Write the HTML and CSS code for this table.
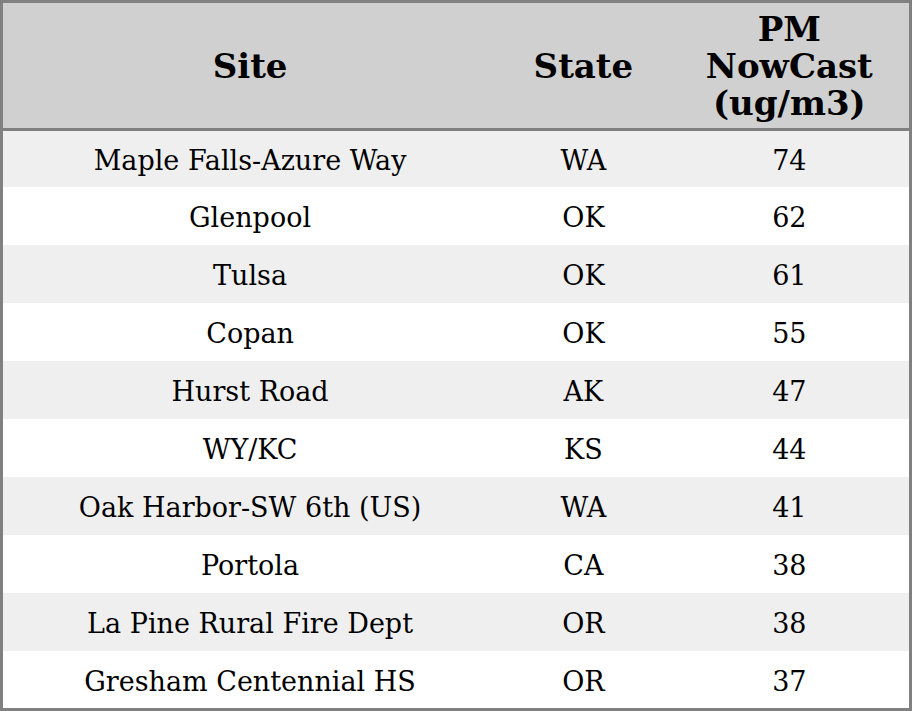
FILE: index.html
```html
<!DOCTYPE html>
<html>
<head>
<meta charset="utf-8">
<link rel="stylesheet" href="styles.css">
</head>
<body>
<table class="aq">
  <thead>
    <tr>
      <th class="c-site">Site</th>
      <th class="c-state">State</th>
      <th class="c-pm">PM<br>NowCast<br>(ug/m3)</th>
    </tr>
  </thead>
  <tbody>
    <tr class="first"><td>Maple Falls-Azure Way</td><td>WA</td><td>74</td></tr>
    <tr><td>Glenpool</td><td>OK</td><td>62</td></tr>
    <tr><td>Tulsa</td><td>OK</td><td>61</td></tr>
    <tr><td>Copan</td><td>OK</td><td>55</td></tr>
    <tr><td>Hurst Road</td><td>AK</td><td>47</td></tr>
    <tr><td>WY/KC</td><td>KS</td><td>44</td></tr>
    <tr><td>Oak Harbor-SW 6th (US)</td><td>WA</td><td>41</td></tr>
    <tr><td>Portola</td><td>CA</td><td>38</td></tr>
    <tr><td>La Pine Rural Fire Dept</td><td>OR</td><td>38</td></tr>
    <tr class="last"><td>Gresham Centennial HS</td><td>OR</td><td>37</td></tr>
  </tbody>
</table>
</body>
</html>
```
FILE: styles.css
```css
html, body {
  margin: 0;
  padding: 0;
  background: #ffffff;
}
.aq {
  width: 912px;
  border-collapse: collapse;
  border: 3px solid #808080;
  font-family: "DejaVu Serif", serif;
  color: #000;
  table-layout: fixed;
}
.aq th {
  background: #d0d0d0;
  font-size: 34px;
  font-weight: bold;
  line-height: 37px;
  height: 128px;
  box-sizing: border-box;
  padding: 1px 0 0 0;
  text-align: center;
  vertical-align: middle;
  border-bottom: 3px solid #808080;
}
.c-site { width: 494px; }
.c-state { width: 172px; }
.c-pm { width: 240px; }
.aq td {
  font-size: 27px;
  line-height: 32px;
  height: 58px;
  box-sizing: border-box;
  text-align: center;
  vertical-align: middle;
  padding: 5px 0 0 0;
}
.aq tr.first td { height: 57px; }
.aq tr.last td { height: 59px; }
.aq tbody tr:nth-child(odd) td { background: #efefef; }
.aq tbody tr:nth-child(even) td { background: #ffffff; }
```
